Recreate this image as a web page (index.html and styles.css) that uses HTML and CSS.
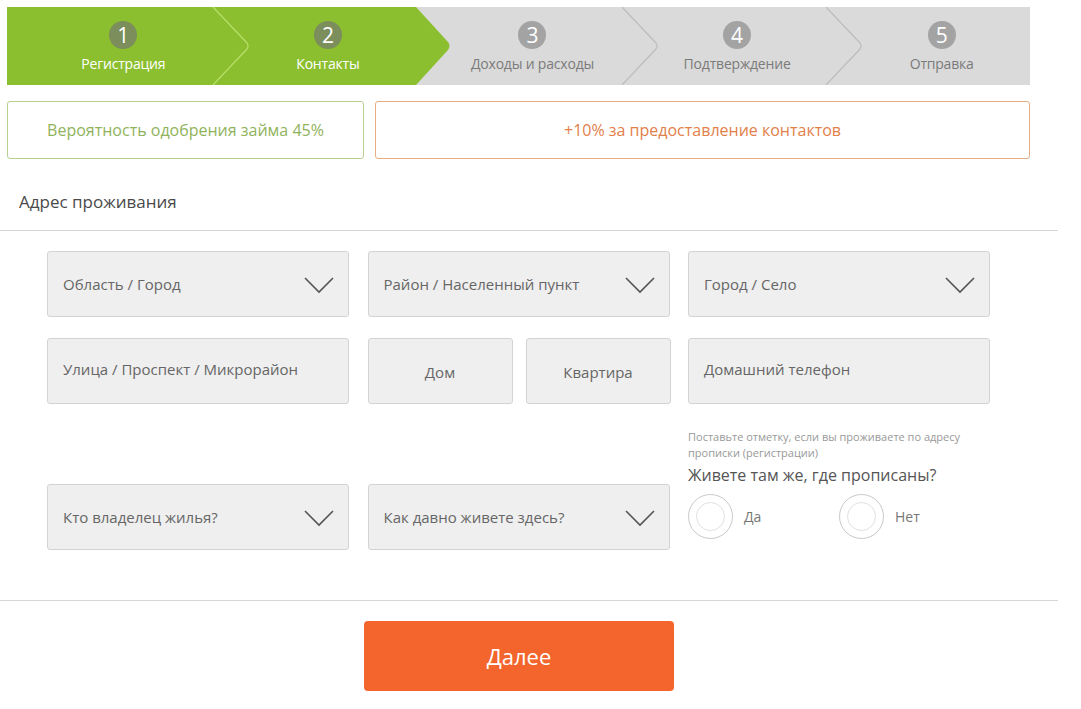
FILE: index.html
```html
<!DOCTYPE html>
<html lang="ru">
<head>
<meta charset="utf-8">
<title>Контакты</title>
<link rel="stylesheet" href="styles.css">
</head>
<body>
<div class="page">
  <div class="stepper">
    <div class="step done">
      <span class="num">1</span>
      <span class="label">Регистрация</span>
    </div>
    <div class="step done current">
      <svg class="sep" width="38" height="78" viewBox="0 0 38 78"><path d="M1 0 L35 36 Q37 39 35 42 L1 78" fill="none" stroke="#b9e06a" stroke-width="1.2"/></svg>
      <span class="num">2</span>
      <span class="label">Контакты</span>
      <svg class="arrow" width="36" height="78" viewBox="0 0 36 78"><path d="M0 0 L32 35 Q35 39 32 43 L0 78 Z" fill="#8cbf2f"/></svg>
    </div>
    <div class="step">
      <span class="num">3</span>
      <span class="label">Доходы и расходы</span>
    </div>
    <div class="step">
      <svg class="sep" width="38" height="78" viewBox="0 0 38 78"><path d="M1 0 L35 36 Q37 39 35 42 L1 78" fill="none" stroke="#bdbdbd" stroke-width="1.2"/></svg>
      <span class="num">4</span>
      <span class="label">Подтверждение</span>
    </div>
    <div class="step">
      <svg class="sep" width="38" height="78" viewBox="0 0 38 78"><path d="M1 0 L35 36 Q37 39 35 42 L1 78" fill="none" stroke="#bdbdbd" stroke-width="1.2"/></svg>
      <span class="num">5</span>
      <span class="label">Отправка</span>
    </div>
  </div>

  <div class="info">
    <div class="info-box green">Вероятность одобрения займа 45%</div>
    <div class="info-box orange">+10% за предоставление контактов</div>
  </div>

  <div class="section-title">Адрес проживания</div>

  <div class="form">
    <div class="field select">Область / Город<svg class="chev" width="30" height="17" viewBox="0 0 30 17"><path d="M1 1 L15 15 L29 1" fill="none" stroke="#555" stroke-width="1.6"/></svg></div>
    <div class="field select">Район / Населенный пункт<svg class="chev" width="30" height="17" viewBox="0 0 30 17"><path d="M1 1 L15 15 L29 1" fill="none" stroke="#555" stroke-width="1.6"/></svg></div>
    <div class="field select">Город / Село<svg class="chev" width="30" height="17" viewBox="0 0 30 17"><path d="M1 1 L15 15 L29 1" fill="none" stroke="#555" stroke-width="1.6"/></svg></div>

    <div class="field input">Улица / Проспект / Микрорайон</div>
    <div class="pair">
      <div class="field center">Дом</div>
      <div class="field center">Квартира</div>
    </div>
    <div class="field input">Домашний телефон</div>

    <div class="field select">Кто владелец жилья?<svg class="chev" width="30" height="17" viewBox="0 0 30 17"><path d="M1 1 L15 15 L29 1" fill="none" stroke="#555" stroke-width="1.6"/></svg></div>
    <div class="field select">Как давно живете здесь?<svg class="chev" width="30" height="17" viewBox="0 0 30 17"><path d="M1 1 L15 15 L29 1" fill="none" stroke="#555" stroke-width="1.6"/></svg></div>
    <div class="same">
      <div class="hint">Поставьте отметку, если вы проживаете по адресу прописки (регистрации)</div>
      <div class="question">Живете там же, где прописаны?</div>
      <div class="radios">
        <label class="radio"><span class="ring"><span class="inner"></span></span>Да</label>
        <label class="radio"><span class="ring"><span class="inner"></span></span>Нет</label>
      </div>
    </div>
  </div>

  <div class="footer">
    <button class="next" type="button">Далее</button>
  </div>
</div>
</body>
</html>
```

FILE: styles.css
```css
* { box-sizing: border-box; }

body {
  margin: 0;
  background: #fff;
  font-family: "Open Sans", "Noto Sans", "Liberation Sans", sans-serif;
  color: #555;
}

.page {
  width: 1058px;
  padding-top: 7px;
}

/* Stepper */
.stepper {
  display: flex;
  height: 78px;
  margin: 0 28px 0 7px;
  background: #dadada;
}

.step {
  position: relative;
  flex: 1;
  display: flex;
  flex-direction: column;
  align-items: center;
  padding: 14px 0 0 28px;
  color: #7a7a7a;
}

.step.done {
  background: #8cbf2f;
  color: #fff;
}

.step.current { z-index: 2; }

.num {
  width: 28px;
  height: 28px;
  border-radius: 50%;
  background: #a3a3a3;
  color: #fff;
  font-size: 21px;
  line-height: 28px;
  text-align: center;
}

.step.done .num { background: #7b8e5b; }

.label {
  margin-top: 7px;
  font-size: 14px;
  line-height: 16px;
  letter-spacing: -0.2px;
}

.sep {
  position: absolute;
  left: 0;
  top: 0;
}

.arrow {
  position: absolute;
  left: 100%;
  top: 0;
}

/* Info boxes */
.info {
  display: flex;
  gap: 11px;
  margin: 16px 28px 0 7px;
}

.info-box {
  height: 58px;
  display: flex;
  align-items: center;
  justify-content: center;
  font-size: 16px;
  border-radius: 3px;
}

.info-box.green {
  width: 357px;
  border: 1px solid #b9cf92;
  color: #8fb35b;
}

.info-box.orange {
  flex: 1;
  border: 1px solid #e6ad82;
  color: #e2804a;
}

/* Section title */
.section-title {
  padding: 31px 0 16px 19px;
  font-size: 17px;
  line-height: 24px;
  color: #4a4a4a;
  border-bottom: 1px solid #d6d6d6;
}

/* Form */
.form {
  display: grid;
  grid-template-columns: 302px 302px 302px;
  grid-template-rows: 66px 66px auto;
  align-items: end;
  column-gap: 18.5px;
  row-gap: 21px;
  padding: 20px 0 0 47px;
}

.field {
  position: relative;
  height: 66px;
  display: flex;
  align-items: center;
  padding: 0 15px;
  background: #efefef;
  border: 1px solid #d3d3d3;
  border-radius: 3px;
  font-size: 15px;
  color: #666;
}

.field.input { padding-bottom: 4px; }

.field.center {
  justify-content: center;
  padding-top: 1px;
}

.chev {
  position: absolute;
  right: 14px;
  top: 25px;
}

.pair {
  display: grid;
  grid-template-columns: 145px 145px;
  gap: 13px;
}

.same {
  padding-top: 4px;
  padding-bottom: 11px;
}

.hint {
  font-size: 11px;
  line-height: 16px;
  color: #999;
}

.question {
  margin-top: 3px;
  font-size: 16px;
  line-height: 22px;
  color: #555;
}

.radios {
  display: flex;
  margin-top: 8px;
}

.radio {
  width: 151px;
  display: flex;
  align-items: center;
  gap: 11px;
  font-size: 14px;
  color: #777;
}

.ring {
  width: 45px;
  height: 45px;
  border-radius: 50%;
  border: 1px solid #c9c9c9;
  display: flex;
  align-items: center;
  justify-content: center;
}

.inner {
  width: 29px;
  height: 29px;
  border-radius: 50%;
  border: 1px solid #e0e0e0;
}

/* Footer */
.footer {
  margin-top: 50px;
  border-top: 1px solid #d6d6d6;
  padding: 20px 0 18px 364px;
}

.next {
  display: block;
  width: 310px;
  height: 70px;
  border: none;
  border-radius: 4px;
  background: #f4652d;
  color: #fff;
  font-family: "Open Sans", "Noto Sans", "Liberation Sans", sans-serif;
  font-size: 22px;
  cursor: pointer;
}
```
